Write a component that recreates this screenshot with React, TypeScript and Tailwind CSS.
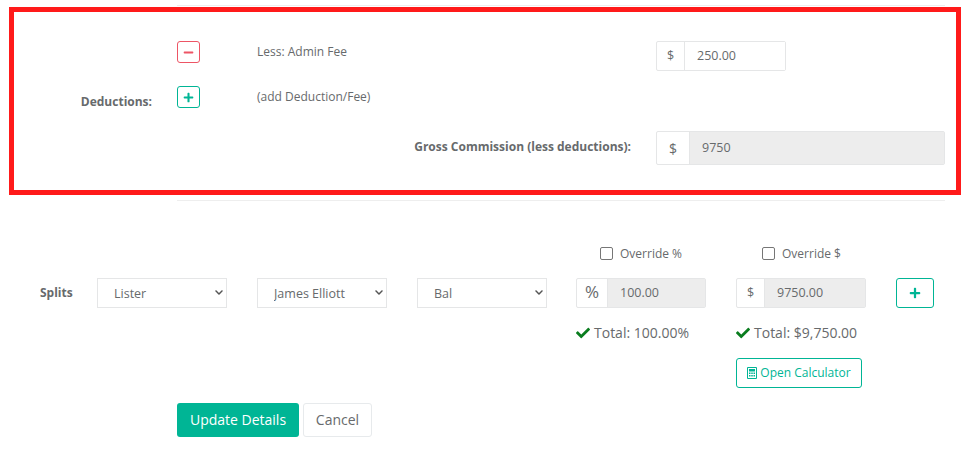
import React from 'react';
import { FaCheck, FaChevronDown, FaMinus, FaPlus } from 'react-icons/fa';

const Prefixed = ({ prefix, value, disabled, className, prefixClass }: { prefix: React.ReactNode; value: string; disabled?: boolean; className: string; prefixClass: string }) => (
  <div className={`flex border border-[#e5e6e7] rounded-[2px] text-[#676a6c] ${className}`}>
    <span className={`flex items-center justify-center shrink-0 border-r border-[#e5e6e7] ${prefixClass}`}>{prefix}</span>
    <input
      readOnly
      value={value}
      className={`min-w-0 flex-1 pl-[12px] text-[12.5px] outline-none ${disabled ? 'bg-[#ededed]' : 'bg-white'}`}
    />
  </div>
);

const Dropdown = ({ value }: { value: string }) => (
  <div className="relative w-[130px] h-[30px]">
    <select className="w-full h-full appearance-none border border-[#e5e6e7] bg-white pl-[16px] pt-[2px] text-[12.5px] text-[#676a6c] outline-none">
      <option>{value}</option>
    </select>
    <FaChevronDown className="absolute right-[3px] top-[10px] w-[10px] h-[9px] text-[#555] pointer-events-none" />
  </div>
);

const Override = ({ label, className }: { label: string; className: string }) => (
  <label className={`flex items-center w-[130px] text-[12px] text-[#676a6c] ${className}`}>
    <input type="checkbox" className="appearance-none w-[13px] h-[13px] border border-[#767676] rounded-[2px] bg-white mr-[7px]" />
    {label}
  </label>
);

// outlined calculator, the solid one from the icon pack is too heavy here
const CalculatorIcon = () => (
  <svg viewBox="0 0 10 12" className="w-[10px] h-[12px] mr-[3px]" fill="currentColor">
    <path fillRule="evenodd" d="M1 0h8a1 1 0 0 1 1 1v10a1 1 0 0 1-1 1H1a1 1 0 0 1-1-1V1a1 1 0 0 1 1-1zm0 1v10h8V1z" />
    <rect x="2" y="2" width="6" height="2.5" />
    <rect x="2" y="5.5" width="1.5" height="1.5" />
    <rect x="4.25" y="5.5" width="1.5" height="1.5" />
    <rect x="6.5" y="5.5" width="1.5" height="1.5" />
    <rect x="2" y="8" width="1.5" height="1.5" />
    <rect x="4.25" y="8" width="1.5" height="1.5" />
    <rect x="6.5" y="8" width="1.5" height="1.5" />
  </svg>
);

export default function App() {
  return (
    <div className="w-[969px] h-[469px] bg-white overflow-hidden font-['Open_Sans',sans-serif] text-[#676a6c]">
      <div className="h-px bg-[#eeeeee] mt-[5px] ml-[177px] mr-[24px]" />
      <section className="ml-[9px] mt-px w-[952px] h-[188px] border-[5px] border-[#ff1a1a] pt-[29px]">
        <div className="grid grid-cols-[163px_80px_399px_289px] grid-rows-[45px_45px_34px]">
          <div />
          <button className="w-[23px] h-[22px] flex items-center justify-center border border-[#ed5565] rounded-[3px] text-[#ed5565]">
            <FaMinus className="w-[11px] h-[11px]" />
          </button>
          <span className="text-[12px] leading-[22px]">Less: Admin Fee</span>
          <Prefixed prefix="$" value="250.00" className="w-[130px] h-[30px]" prefixClass="w-[28px] text-[12.5px]" />

          <span className="w-[138px] pt-[7px] text-right text-[12px] leading-[18px] font-bold">Deductions:</span>
          <button className="w-[23px] h-[22px] flex items-center justify-center border border-[#00b595] rounded-[3px] text-[#00b595]">
            <FaPlus className="w-[11px] h-[11px]" />
          </button>
          <span className="text-[12px] leading-[22px]">(add Deduction/Fee)</span>
          <div />

          <div />
          <span className="col-span-2 pt-px pr-[25px] text-right text-[12px] leading-[30px] font-bold">Gross Commission (less deductions):</span>
          <Prefixed prefix="$" value="9750" disabled className="w-[289px] h-[34px]" prefixClass="w-[33px] text-[14px]" />
        </div>
      </section>
      <div className="h-px bg-[#eeeeee] mt-[5px] ml-[177px] mr-[24px]" />

      <div className="flex mt-[44px] pl-[576px] h-[17px]">
        <Override label="Override %" className="pl-[24px]" />
        <Override label="Override $" className="ml-[30px] pl-[26px]" />
      </div>

      <div className="flex items-start mt-[16px] pl-[40px]">
        <span className="w-[57px] text-[12px] leading-[30px] font-bold">Splits</span>
        <div className="flex gap-[30px]">
          <Dropdown value="Lister" />
          <Dropdown value="James Elliott" />
          <Dropdown value="Bal" />
        </div>
        <div className="ml-[29px] w-[130px]">
          <Prefixed prefix="%" value="100.00" disabled className="w-[130px] h-[30px]" prefixClass="w-[31px] text-[17px] pb-[2px]" />
          <div className="flex items-center mt-[15px] text-[14px] leading-[20px]">
            <FaCheck className="w-[14px] h-[14px] text-[#0a7d1f] mr-[4px]" />
            Total: 100.00%
          </div>
        </div>
        <div className="ml-[30px] w-[130px]">
          <Prefixed prefix="$" value="9750.00" disabled className="w-[130px] h-[30px]" prefixClass="w-[28px] text-[12.5px]" />
          <div className="flex items-center mt-[15px] text-[14px] leading-[20px]">
            <FaCheck className="w-[14px] h-[14px] text-[#0a7d1f] mr-[4px]" />
            Total: $9,750.00
          </div>
          <button className="mt-[15px] w-[126px] h-[30px] flex items-center justify-center whitespace-nowrap border border-[#00b595] rounded-[3px] text-[12px] text-[#00b595]">
            <CalculatorIcon />
            Open Calculator
          </button>
        </div>
        <button className="ml-[30px] w-[38px] h-[30px] flex items-center justify-center border border-[#00b595] rounded-[3px] text-[#00b595]">
          <FaPlus className="w-[12px] h-[12px]" />
        </button>
      </div>

      <div className="flex gap-[4px] mt-[15px] ml-[177px]">
        <button className="w-[122px] h-[34px] pb-px rounded-[3px] bg-[#00b595] text-white text-[14px]">Update Details</button>
        <button className="w-[69px] h-[34px] pb-px rounded-[3px] border border-[#e7eaec] bg-white text-[14px]">Cancel</button>
      </div>
    </div>
  );
}
